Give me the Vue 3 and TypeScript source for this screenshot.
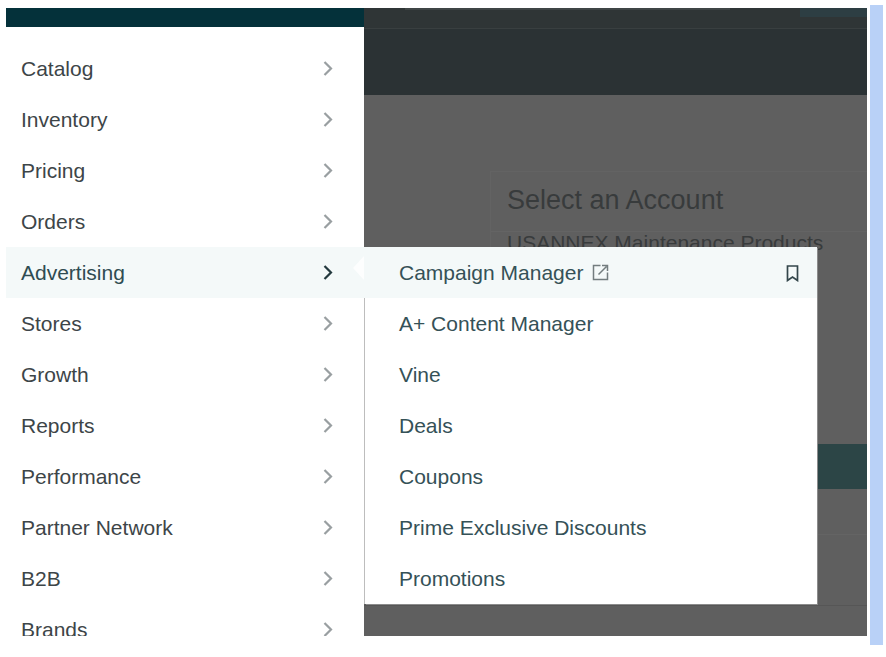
<script setup lang="ts">
const menuItems = ['Catalog', 'Inventory', 'Pricing', 'Orders', 'Advertising', 'Stores', 'Growth', 'Reports', 'Performance', 'Partner Network', 'B2B', 'Brands']
const subItems = ['Campaign Manager', 'A+ Content Manager', 'Vine', 'Deals', 'Coupons', 'Prime Exclusive Discounts', 'Promotions']
const activeItem = 'Advertising'
</script>

<template>
  <div class="page">
    <div class="frame">
      <aside class="sidebar">
        <div class="side-top"></div>
        <ul class="menu">
          <li v-for="item in menuItems" :key="item" class="menu-row" :class="{ active: item === activeItem }">
            <span>{{ item }}</span>
            <svg class="chevron" width="12" height="18" viewBox="0 0 12 18" fill="none">
              <path d="M2.5 2 9 8.5 2.5 15" stroke="currentColor" stroke-width="2.2" />
            </svg>
          </li>
        </ul>
      </aside>

      <main class="backdrop">
        <header class="topbar">
          <div class="top-strip">
            <div class="top-light"></div>
            <div class="top-teal"></div>
          </div>
        </header>
        <section class="account">
          <h2>Select an Account</h2>
          <p>USANNEX Maintenance Products</p>
          <div class="teal-band"></div>
          <div class="band-line"></div>
        </section>
        <div class="foot-line"></div>
      </main>

      <div class="submenu">
        <span class="notch"></span>
        <div v-for="(sub, i) in subItems" :key="sub" class="sub-row" :class="{ first: i === 0 }">
          <span>{{ sub }}</span>
          <svg v-if="i === 0" class="ext" width="17" height="17" viewBox="0 0 17 17" fill="none">
            <path d="M8.5 1.5H1.5v14h14V8.5M6.5 10.5 14.5 2.5M10 1.5h5.5V7" stroke="#737d7f" stroke-width="1.5" />
          </svg>
          <svg v-if="i === 0" class="mark" width="13" height="17" viewBox="0 0 13 17" fill="none">
            <path d="M1.5 1h10v14.5L6.5 12l-5 3.5z" stroke="#33464b" stroke-width="1.7" />
          </svg>
        </div>
      </div>
    </div>
    <div class="scrollbar"></div>
  </div>
</template>

<style>
html, body {
  margin: 0;
  background: #fff;
}
</style>

<style scoped>
.page {
  display: flex;
  align-items: flex-start;
  width: 886px;
  height: 657px;
  padding: 8px 0 0 6px;
  box-sizing: border-box;
  overflow: hidden;
  font-family: "Liberation Sans", Arial, sans-serif;
}

.frame {
  position: relative;
  display: flex;
  width: 861px;
  height: 628px;
  overflow: hidden;
}

.scrollbar {
  width: 13px;
  height: 640px;
  margin: -3px 0 0 3px;
  background: #b9d1f7;
}

.sidebar {
  width: 358px;
  flex-shrink: 0;
  background: #fff;
  overflow: hidden;
}

.side-top {
  height: 19px;
  background: #04313a;
}

.menu {
  list-style: none;
  margin: 0;
  padding: 16px 0 0;
}

.menu-row {
  display: flex;
  align-items: center;
  justify-content: space-between;
  height: 51px;
  padding: 0 30px 0 15px;
  font-size: 21px;
  color: #3d4548;
}

.menu-row .chevron {
  color: #999fa1;
}

.menu-row.active {
  background: #f4f9f9;
  color: #2f4c52;
}

.menu-row.active .chevron {
  color: #23393e;
}

.backdrop {
  flex: 1;
  min-width: 0;
  background: #5f5f5f;
}

.topbar {
  height: 87px;
  background: #2b3234;
}

.top-strip {
  position: relative;
  height: 20px;
  border-bottom: 1px solid #393f40;
  background: #2f3536;
}

.top-light {
  position: absolute;
  left: 41px;
  top: 0;
  width: 325px;
  height: 2px;
  background: #3f4546;
}

.top-teal {
  position: absolute;
  right: 0;
  top: 0;
  width: 67px;
  height: 9px;
  background: #2d3e43;
}

.account {
  margin: 76px 0 0 126px;
  border-top: 1px solid #636363;
  border-left: 1px solid #636363;
}

.account h2 {
  margin: 0;
  height: 60px;
  padding: 12px 0 0 16px;
  box-sizing: border-box;
  font-size: 27px;
  line-height: 32px;
  font-weight: 400;
  color: #383b3c;
  border-bottom: 1px solid #646464;
}

.account p {
  margin: 0;
  padding: 0 0 0 16px;
  height: 24px;
  font-size: 21px;
  line-height: 22px;
  color: #383b3c;
}

.teal-band {
  height: 45px;
  margin-top: 188px;
  background: #2c4546;
}

.band-line {
  height: 1px;
  margin-top: 45px;
  background: #646464;
}

.foot-line {
  height: 1px;
  margin-top: 70px;
  background: #565656;
}

.submenu {
  position: absolute;
  left: 359px;
  top: 239px;
  width: 452px;
  background: #fff;
  box-shadow: -1px 0 0 #bdbdbd, 1px 1px 0 #8c8c8c;
}

.notch {
  position: absolute;
  left: -12px;
  top: 8px;
  width: 12px;
  height: 26px;
  background: #fdfefe;
  clip-path: polygon(100% 0, 0 50%, 100% 100%);
}

.sub-row {
  position: relative;
  display: flex;
  align-items: center;
  height: 51px;
  padding-left: 34px;
  font-size: 21px;
  color: #355157;
}

.sub-row.first {
  background: #f4f9f9;
  box-shadow: -1px 0 0 #f4f9f9;
}

.ext {
  margin-left: 9px;
}

.mark {
  position: absolute;
  right: 18px;
  top: 18px;
}
</style>
